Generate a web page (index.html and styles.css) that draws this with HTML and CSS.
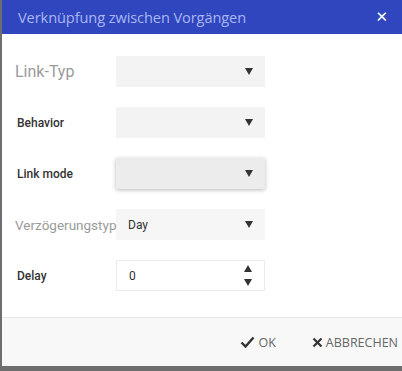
FILE: index.html
```html
<!DOCTYPE html>
<html>
<head>
<meta charset="utf-8">
<link rel="stylesheet" href="styles.css">
</head>
<body>
<div class="dialog">
  <div class="header">
    <span class="title">Verknüpfung zwischen Vorgängen</span>
    <span class="close">✕</span>
  </div>
  <div class="content">
    <div class="row">
      <label class="lbl light big">Link-Typ</label>
      <div class="field select"><span class="val"></span><span class="arrow"></span></div>
    </div>
    <div class="row">
      <label class="lbl strong">Behavior</label>
      <div class="field select"><span class="val"></span><span class="arrow"></span></div>
    </div>
    <div class="row">
      <label class="lbl strong">Link mode</label>
      <div class="field select focused"><span class="val"></span><span class="arrow"></span></div>
    </div>
    <div class="row">
      <label class="lbl light mid">Verzögerungstyp</label>
      <div class="field select pale"><span class="val">Day</span><span class="arrow"></span></div>
    </div>
    <div class="row">
      <label class="lbl strong">Delay</label>
      <div class="field number"><span class="val">0</span><span class="spin"><span class="up"></span><span class="down"></span></span></div>
    </div>
  </div>
  <div class="footer">
    <button class="btn"><svg width="15" height="12" viewBox="0 0 15 12"><path d="M1.5 6.5 L5.5 10.5 L13.5 1.5" fill="none" stroke="#333" stroke-width="2.4"/></svg>OK</button>
    <button class="btn"><svg width="11" height="11" viewBox="0 0 11 11"><path d="M1.5 1.5 L9.5 9.5 M9.5 1.5 L1.5 9.5" stroke="#333" stroke-width="2.2"/></svg>ABBRECHEN</button>
  </div>
</div>
</body>
</html>
```
FILE: styles.css
```css
html, body { margin: 0; padding: 0; }
body { background: #6e6e6e; width: 402px; height: 371px; overflow: hidden; font-family: Roboto, "Liberation Sans", sans-serif; }
.dialog { margin-left: 2px; width: 400px; height: 366px; background: #fff; display: flex; flex-direction: column; }
.header { height: 34px; background: #2f46bf; display: flex; align-items: center; justify-content: space-between; padding: 0 14px 0 16px; box-sizing: border-box; }
.title { font-family: "Open Sans", sans-serif; font-size: 14.6px; color: #aab6f2; letter-spacing: -0.1px; }
.close { color: #fff; font-weight: bold; font-size: 15px; font-family: "DejaVu Sans", sans-serif; }
.content { flex: 1; padding: 22px 0 0 0; display: flex; flex-direction: column; gap: 20px; }
.row { display: flex; align-items: center; height: 31px; }
.lbl { width: 114px; box-sizing: border-box; padding-left: 13px; white-space: nowrap; }
.lbl.light { color: #9a9a9a; font-weight: 400; }
.lbl.big { font-size: 16px; }
.lbl.mid { font-size: 13.5px; background: #fff; position: relative; z-index: 1; }
.lbl.strong { font-size: 12px; font-weight: 500; color: #333; padding-left: 15px; }
.field { width: 149px; height: 31px; box-sizing: border-box; display: flex; align-items: center; justify-content: space-between; padding: 0 12px 0 12px; font-size: 12px; color: #333; }
.select { background: #f3f3f3; }
.select.focused { background: #ececec; box-shadow: 0 1px 4px rgba(0,0,0,0.28); }
.select.pale { background: #f6f6f6; }
.number { background: #fff; border: 1px solid #ececec; }
.arrow { width: 0; height: 0; border-left: 4.5px solid transparent; border-right: 4.5px solid transparent; border-top: 7px solid #333; }
.spin { display: flex; flex-direction: column; gap: 7px; }
.up { width: 0; height: 0; border-left: 4.5px solid transparent; border-right: 4.5px solid transparent; border-bottom: 7px solid #333; }
.down { width: 0; height: 0; border-left: 4.5px solid transparent; border-right: 4.5px solid transparent; border-top: 7px solid #333; }
.footer { height: 48px; background: #f8f8f8; border-top: 1px solid #e6e6e6; display: flex; justify-content: flex-end; align-items: center; padding-right: 4px; gap: 36px; }
.btn { background: none; border: none; padding: 0; display: flex; align-items: center; gap: 3px; font-family: "Open Sans", sans-serif; font-size: 12.5px; color: #666; }
```
